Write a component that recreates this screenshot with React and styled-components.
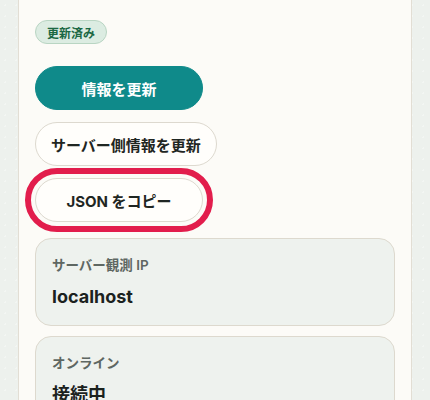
import React from 'react'
import styled, { createGlobalStyle } from 'styled-components'

const GlobalStyle = createGlobalStyle`
  html, body {
    margin: 0;
    padding: 0;
    background-color: #edf1ed;
    background-image: radial-gradient(rgba(255, 255, 255, 0.35) 1px, transparent 1px);
    background-size: 11px 11px;
    font-family: "Inter", "Noto Sans CJK JP", sans-serif;
    color: #1f2622;
  }
`

const App = () => {
  return (
    <>
      <GlobalStyle />
      <Page>
        <Panel>
          <Badge>更新済み</Badge>
          <Actions>
            <Button primary>情報を更新</Button>
            <Button>サーバー側情報を更新</Button>
            <Button highlighted>JSON をコピー</Button>
          </Actions>
          <Cards>
            <Card>
              <Label>サーバー観測 IP</Label>
              <Value>localhost</Value>
            </Card>
            <Card>
              <Label>オンライン</Label>
              <Value>接続中</Value>
            </Card>
          </Cards>
        </Panel>
      </Page>
    </>
  )
}

export default App

const Page = styled.div`
  padding: 0 18px;
  height: 400px;
  overflow: hidden;
`

const Panel = styled.div`
  background: #fcfbf7;
  border-left: 1px solid #e2ded4;
  border-right: 1px solid #e2ded4;
  padding: 20px 16px 40px;
  min-height: 500px;
  display: flex;
  flex-direction: column;
  align-items: flex-start;
`

const Badge = styled.span`
  height: 24px;
  box-sizing: border-box;
  display: inline-flex;
  align-items: center;
  padding: 0 11px;
  border-radius: 999px;
  background: #dcece2;
  border: 1px solid #b9d5c3;
  color: #1b6843;
  font-size: 12px;
  font-weight: 700;
`

const Actions = styled.div`
  margin-top: 22px;
  display: flex;
  flex-direction: column;
  align-items: flex-start;
  gap: 12px;
`

const Button = styled.button`
  height: 44px;
  min-width: 168px;
  box-sizing: border-box;
  padding: 0 15px;
  border-radius: 999px;
  font-family: inherit;
  font-size: 15px;
  font-weight: 700;
  cursor: pointer;
  background: ${p => (p.primary ? '#0f8a8a' : '#fffefb')};
  color: ${p => (p.primary ? '#ffffff' : '#1f2622')};
  border: 1px solid ${p => (p.primary ? '#0f8a8a' : '#ddd9cf')};
  outline: ${p => (p.highlighted ? '6px solid #e21d4c' : 'none')};
  outline-offset: 4px;
`

const Cards = styled.div`
  margin-top: 16px;
  align-self: stretch;
  display: flex;
  flex-direction: column;
  gap: 10px;
`

const Card = styled.div`
  background: #eef2ee;
  border: 1px solid #ddd9ce;
  border-radius: 16px;
  padding: 16px;
  display: flex;
  flex-direction: column;
  gap: 10px;
`

const Label = styled.div`
  font-size: 13.5px;
  line-height: 20px;
  font-weight: 600;
  color: #5e6762;
`

const Value = styled.div`
  font-size: 18px;
  line-height: 24px;
  font-weight: 700;
  color: #1b221e;
`
